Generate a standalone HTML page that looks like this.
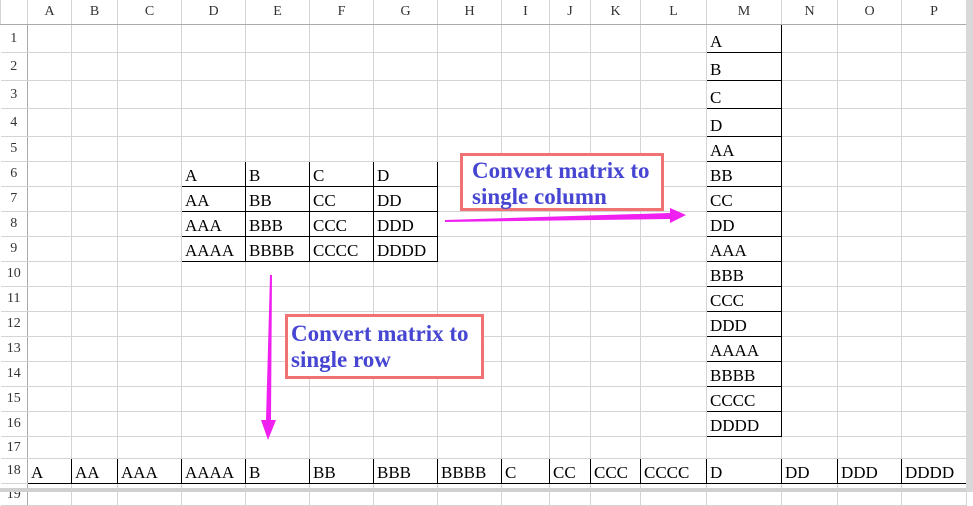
<!DOCTYPE html>
<html><head><meta charset="utf-8"><style>
body{margin:0;background:#fff;width:973px;height:492px;overflow:hidden;position:relative;font-family:"Liberation Serif",serif}
table{border-collapse:collapse;table-layout:fixed;position:absolute;left:0;top:0}
td{border:1px solid #d4d4d4;padding:0 0 0 3px;font-size:17px;color:#000;white-space:nowrap;overflow:hidden;vertical-align:bottom;line-height:21px}
tr.h td{font-size:14px;color:#333;text-align:center;padding:0;border-top:none;border-bottom:1px solid #aaa;vertical-align:middle}
td.r{font-size:14px;color:#333;text-align:center;padding:0;border-left:none;border-right:1px solid #aaa;vertical-align:middle}
td.b{border:1px solid #000}
.box{position:absolute;background:#fff;border:3px solid #f07272;color:#4646d2;font-weight:bold;font-size:23px;line-height:26px;padding:2px 0 0 9px;box-sizing:border-box;white-space:nowrap}
</style></head><body>
<table>
<colgroup><col style="width:27px"><col style="width:44px"><col style="width:46px"><col style="width:64px"><col style="width:64px"><col style="width:64px"><col style="width:64px"><col style="width:64px"><col style="width:64px"><col style="width:48px"><col style="width:41px"><col style="width:50px"><col style="width:66px"><col style="width:75px"><col style="width:56px"><col style="width:64px"><col style="width:65px"></colgroup>
<tr class="h" style="height:24px"><td></td><td>A</td><td>B</td><td>C</td><td>D</td><td>E</td><td>F</td><td>G</td><td>H</td><td>I</td><td>J</td><td>K</td><td>L</td><td>M</td><td>N</td><td>O</td><td>P</td></tr>
<tr style="height:28px"><td class="r">1</td><td></td><td></td><td></td><td></td><td></td><td></td><td></td><td></td><td></td><td></td><td></td><td></td><td class="b">A</td><td></td><td></td><td></td></tr>
<tr style="height:28px"><td class="r">2</td><td></td><td></td><td></td><td></td><td></td><td></td><td></td><td></td><td></td><td></td><td></td><td></td><td class="b">B</td><td></td><td></td><td></td></tr>
<tr style="height:28px"><td class="r">3</td><td></td><td></td><td></td><td></td><td></td><td></td><td></td><td></td><td></td><td></td><td></td><td></td><td class="b">C</td><td></td><td></td><td></td></tr>
<tr style="height:28px"><td class="r">4</td><td></td><td></td><td></td><td></td><td></td><td></td><td></td><td></td><td></td><td></td><td></td><td></td><td class="b">D</td><td></td><td></td><td></td></tr>
<tr style="height:25px"><td class="r">5</td><td></td><td></td><td></td><td></td><td></td><td></td><td></td><td></td><td></td><td></td><td></td><td></td><td class="b">AA</td><td></td><td></td><td></td></tr>
<tr style="height:25px"><td class="r">6</td><td></td><td></td><td></td><td class="b">A</td><td class="b">B</td><td class="b">C</td><td class="b">D</td><td></td><td></td><td></td><td></td><td></td><td class="b">BB</td><td></td><td></td><td></td></tr>
<tr style="height:25px"><td class="r">7</td><td></td><td></td><td></td><td class="b">AA</td><td class="b">BB</td><td class="b">CC</td><td class="b">DD</td><td></td><td></td><td></td><td></td><td></td><td class="b">CC</td><td></td><td></td><td></td></tr>
<tr style="height:25px"><td class="r">8</td><td></td><td></td><td></td><td class="b">AAA</td><td class="b">BBB</td><td class="b">CCC</td><td class="b">DDD</td><td></td><td></td><td></td><td></td><td></td><td class="b">DD</td><td></td><td></td><td></td></tr>
<tr style="height:25px"><td class="r">9</td><td></td><td></td><td></td><td class="b">AAAA</td><td class="b">BBBB</td><td class="b">CCCC</td><td class="b">DDDD</td><td></td><td></td><td></td><td></td><td></td><td class="b">AAA</td><td></td><td></td><td></td></tr>
<tr style="height:25px"><td class="r">10</td><td></td><td></td><td></td><td></td><td></td><td></td><td></td><td></td><td></td><td></td><td></td><td></td><td class="b">BBB</td><td></td><td></td><td></td></tr>
<tr style="height:25px"><td class="r">11</td><td></td><td></td><td></td><td></td><td></td><td></td><td></td><td></td><td></td><td></td><td></td><td></td><td class="b">CCC</td><td></td><td></td><td></td></tr>
<tr style="height:25px"><td class="r">12</td><td></td><td></td><td></td><td></td><td></td><td></td><td></td><td></td><td></td><td></td><td></td><td></td><td class="b">DDD</td><td></td><td></td><td></td></tr>
<tr style="height:25px"><td class="r">13</td><td></td><td></td><td></td><td></td><td></td><td></td><td></td><td></td><td></td><td></td><td></td><td></td><td class="b">AAAA</td><td></td><td></td><td></td></tr>
<tr style="height:25px"><td class="r">14</td><td></td><td></td><td></td><td></td><td></td><td></td><td></td><td></td><td></td><td></td><td></td><td></td><td class="b">BBBB</td><td></td><td></td><td></td></tr>
<tr style="height:25px"><td class="r">15</td><td></td><td></td><td></td><td></td><td></td><td></td><td></td><td></td><td></td><td></td><td></td><td></td><td class="b">CCCC</td><td></td><td></td><td></td></tr>
<tr style="height:25px"><td class="r">16</td><td></td><td></td><td></td><td></td><td></td><td></td><td></td><td></td><td></td><td></td><td></td><td></td><td class="b">DDDD</td><td></td><td></td><td></td></tr>
<tr style="height:20px"><td class="r">17</td><td></td><td></td><td></td><td></td><td></td><td></td><td></td><td></td><td></td><td></td><td></td><td></td><td></td><td></td><td></td><td></td></tr>
<tr style="height:25px"><td class="r">18</td><td class="b">A</td><td class="b">AA</td><td class="b">AAA</td><td class="b">AAAA</td><td class="b">B</td><td class="b">BB</td><td class="b">BBB</td><td class="b">BBBB</td><td class="b">C</td><td class="b">CC</td><td class="b">CCC</td><td class="b">CCCC</td><td class="b">D</td><td class="b">DD</td><td class="b">DDD</td><td class="b">DDDD</td></tr>
<tr style="height:20px"><td class="r">19</td><td></td><td></td><td></td><td></td><td></td><td></td><td></td><td></td><td></td><td></td><td></td><td></td><td></td><td></td><td></td><td></td></tr>
</table>
<div style="position:absolute;left:0;top:488px;width:973px;height:4px;background:#d0d0d0"></div>
<div style="position:absolute;left:966px;top:0;width:7px;height:492px;background:#d8d8d8"></div>
<svg style="position:absolute;left:0;top:0" width="973" height="492">
<polygon points="445,220 670,213 670,208 686,215 670,223 670,219 445,222" fill="#f020f0"/>
<polygon points="270,275 272,275 271,420 276,420 268,440 261,420 266,420" fill="#f020f0"/>
</svg>
<div class="box" style="left:460px;top:153px;width:204px;height:58px">Convert matrix to<br>single column</div>
<div class="box" style="left:285px;top:314px;width:199px;height:65px;padding:4px 0 0 3px">Convert matrix to<br>single row</div>
</body></html>
